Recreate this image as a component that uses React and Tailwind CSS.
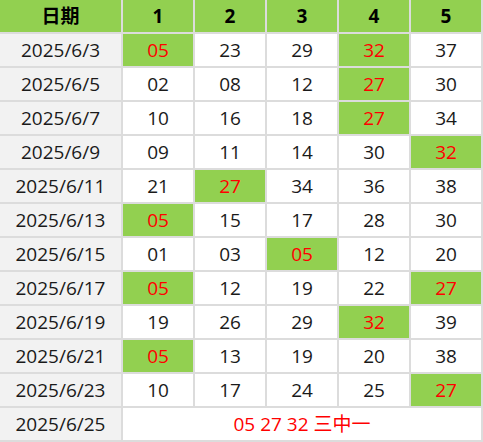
const header = ['日期', '1', '2', '3', '4', '5'];

const rows = [
  ['2025/6/3', ['05', 1], ['23'], ['29'], ['32', 1], ['37']],
  ['2025/6/5', ['02'], ['08'], ['12'], ['27', 1], ['30']],
  ['2025/6/7', ['10'], ['16'], ['18'], ['27', 1], ['34']],
  ['2025/6/9', ['09'], ['11'], ['14'], ['30'], ['32', 1]],
  ['2025/6/11', ['21'], ['27', 1], ['34'], ['36'], ['38']],
  ['2025/6/13', ['05', 1], ['15'], ['17'], ['28'], ['30']],
  ['2025/6/15', ['01'], ['03'], ['05', 1], ['12'], ['20']],
  ['2025/6/17', ['05', 1], ['12'], ['19'], ['22'], ['27', 1]],
  ['2025/6/19', ['19'], ['26'], ['29'], ['32', 1], ['39']],
  ['2025/6/21', ['05', 1], ['13'], ['19'], ['20'], ['38']],
  ['2025/6/23', ['10'], ['17'], ['24'], ['25'], ['27', 1]],
];

export default function App() {
  return (
    <div
      className="w-[483px] h-[442px] bg-[#dcdcdc] pr-[2px] pb-[2px] grid grid-cols-[121px_repeat(5,70px)] auto-rows-[32px] gap-[2px] text-[19px] text-[#1a1a1a]"
      style={{ fontFamily: '"Open Sans", "Noto Sans CJK SC", sans-serif' }}
    >
      {header.map((h) => (
        <div key={h} className="bg-[#92d050] flex items-center justify-center font-bold text-black">
          {h}
        </div>
      ))}

      {rows.map(([date, ...nums]) => (
        <div key={date} className="contents">
          <div className="bg-[#f2f2f2] flex items-center justify-center">{date}</div>
          {nums.map(([n, hit], i) => (
            <div
              key={i}
              className={
                hit
                  ? 'bg-[#92d050] text-[#ff0000] flex items-center justify-center'
                  : 'bg-white flex items-center justify-center'
              }
            >
              {n}
            </div>
          ))}
        </div>
      ))}

      <div className="bg-[#f2f2f2] flex items-center justify-center">2025/6/25</div>
      <div className="col-span-5 bg-white flex items-center justify-center text-[#ff0000]">
        05 27 32 三中一
      </div>
    </div>
  );
}
